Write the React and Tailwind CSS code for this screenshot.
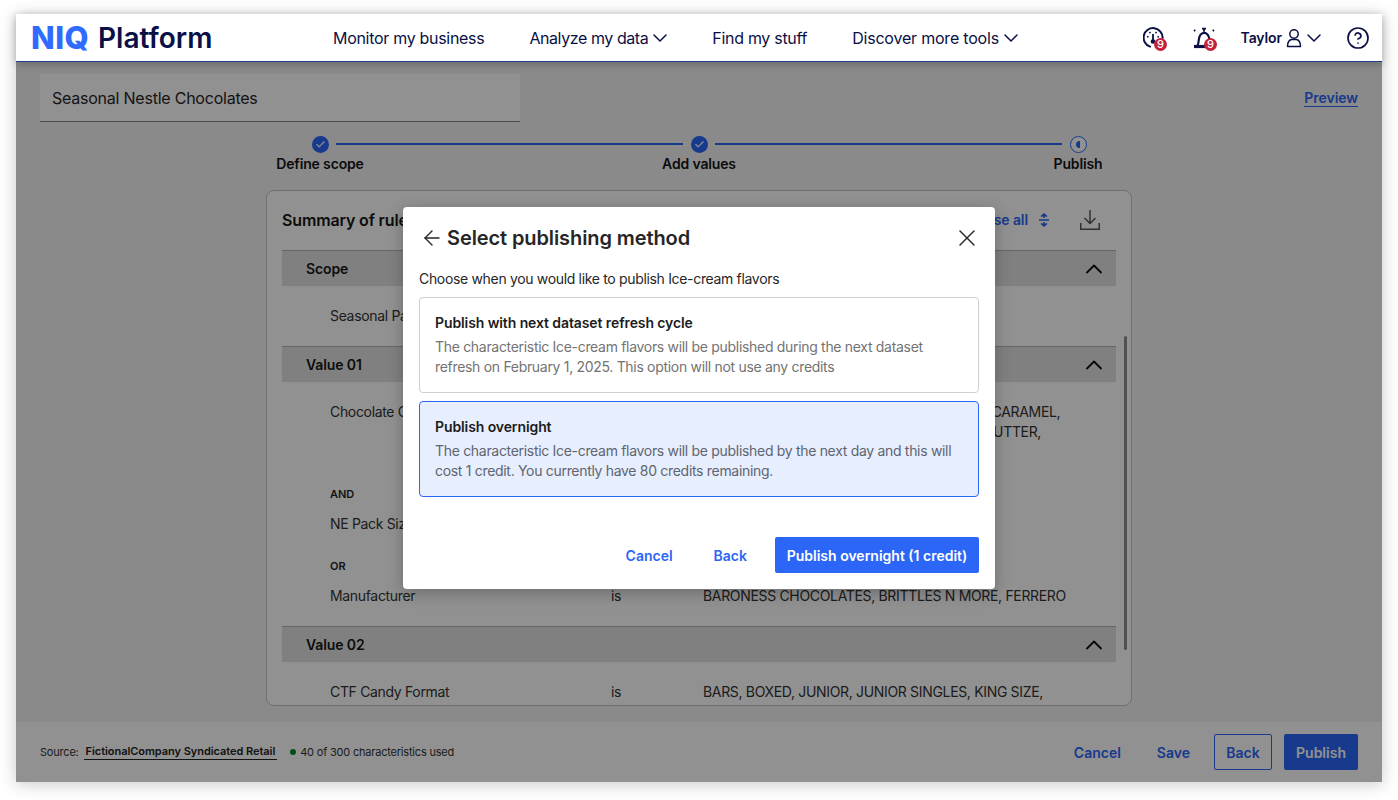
import React from "react";
import { ArrowLeft, X, ChevronUp, ChevronDown, CircleHelp, Check } from "lucide-react";

function Badge({ left }) {
  return (
    <span className={`absolute top-[12.5px] flex h-[13px] w-[13px] items-center justify-center rounded-full bg-[#c4213f] text-[11px] font-medium leading-none text-white ${left}`}>
      9
    </span>
  );
}

function Gauge() {
  return (
    <span className="relative block h-[24px] w-[24px]">
      <svg width="24" height="24" viewBox="0 0 24 24" fill="none" stroke="#0a1045" strokeWidth="2" className="absolute left-0 top-0">
        <path d="M7 20.600A9.500 9.500 0 1 1 19.600 12" strokeLinecap="round" />
        <path d="M10 8v6" strokeWidth="1.800" />
        <circle cx="10" cy="15.500" r="2.300" fill="#0a1045" stroke="none" />
        <path d="M4 10.500l1.500.5M6.500 6l1 1.200M13.500 6l-1 1.200M16 10.500l-1.500.5" strokeWidth="1.500" />
      </svg>
      <Badge left="left-[11.5px]" />
    </span>
  );
}

function Alarm() {
  return (
    <span className="relative block h-[24px] w-[24px]">
      <svg width="24" height="24" viewBox="0 0 24 24" fill="none" stroke="#0a1045" strokeWidth="2.200" className="absolute left-0 top-0">
        <path d="M10 2.700h4M12 2.700v3" strokeWidth="1.800" />
        <path d="M5 20.500c1.200-1.500 1.500-3 1.800-6.500.3-4 2.400-7.200 5.200-7.200s5 3 5.400 6.500" />
        <path d="M2 20.500h11" strokeWidth="3.200" />
        <path d="M2 4l1.300 1M22 4l-1.300 1" strokeWidth="1.800" />
      </svg>
      <Badge left="left-[12.5px]" />
    </span>
  );
}

function UserIcon() {
  return (
    <svg width="17" height="20" viewBox="0 0 17 20" fill="none" stroke="#0a1045" strokeWidth="1.500" className="ml-[3px]">
      <circle cx="9" cy="6" r="4.200" />
      <path d="M2.500 18.500c0-4.500 1.800-6.500 4-7h5c2.200.5 4 2.500 4 7z" strokeLinejoin="round" />
    </svg>
  );
}

function DownloadIcon() {
  return (
    <svg width="20" height="20" viewBox="0 0 20 20" fill="none" stroke="#555555" strokeWidth="1.500" className="ml-[30px]">
      <path d="M10 0v13M4.500 8l5.500 5.500L15.500 8" />
      <path d="M.75 13v6.250h18.500V13" />
    </svg>
  );
}

function CollapseIcon() {
  return (
    <svg width="12" height="14" viewBox="0 0 12 14" fill="none" stroke="#2b66f6" strokeWidth="1.500" className="ml-[10px]">
      <path d="M1 7h10" />
      <path d="M6 1.500v3.500M6 9v3.500" />
      <path d="M3 3.500L6 1l3 2.500M3 10.500L6 13l3-2.500" fill="#2b66f6" />
    </svg>
  );
}

function StepDone({ label }) {
  return (
    <div className="flex w-[120px] shrink-0 flex-col items-center">
      <span className="flex h-[17px] w-[17px] items-center justify-center rounded-full bg-[#2b66f6]">
        <Check size={11} strokeWidth={2.5} className="text-white" />
      </span>
      <span className="mt-[1px] text-[14px] font-semibold leading-[20px] tracking-[-0.15px] text-[#161616]">{label}</span>
    </div>
  );
}

function SectionBar({ label }) {
  return (
    <div className="flex h-[36px] items-center justify-between border-t border-[#b5b5b5] bg-[#e2e2e2] pl-[24px] pr-[8px]">
      <span className="text-[14px] font-semibold tracking-[-0.1px] text-[#161616]">{label}</span>
      <ChevronUp size={28} strokeWidth={1.600} className="text-[#111111]" />
    </div>
  );
}

function Rule({ name, value, className = "" }) {
  return (
    <div className={`flex text-[14px] leading-[20px] tracking-[-0.33px] text-[#333333] ${className}`}>
      <span className="w-[329px] shrink-0 pl-[48px]">{name}</span>
      <span className="w-[92px] shrink-0">is</span>
      <span className="whitespace-pre-line">{value}</span>
    </div>
  );
}

function Connector({ label }) {
  return <div className="pl-[48px] text-[11px] font-semibold leading-[16px] text-[#262626]">{label}</div>;
}

function Option({ title, lines, selected }) {
  return (
    <div
      className={`h-[96px] rounded-[4px] border px-[15px] pt-[15px] ${
        selected ? "border-[#2b66f6] bg-[#e7eefe]" : "border-[#cfcfcf] bg-white"
      }`}
    >
      <div className="text-[14px] font-semibold leading-[20px] tracking-[-0.1px] text-[#1c1c1c]">{title}</div>
      <div className={`mt-[4px] whitespace-nowrap text-[14px] leading-[20px] tracking-[-0.31px] ${selected ? "text-[#5f6570]" : "text-[#737373]"}`}>
        {lines[0]}
        <br />
        {lines[1]}
      </div>
    </div>
  );
}

export default function App() {
  return (
    <div className="min-h-[800px] bg-white px-[16px] pb-[18px] pt-[14px] font-['Inter',sans-serif]">
      <div className="flex h-[768px] flex-col shadow-[0_2px_16px_rgba(0,0,0,0.22)]">
        <header className="z-20 flex h-[48px] shrink-0 items-center border-b border-[#1f3f8a] bg-white text-[#0a1045] shadow-[0_2px_8px_rgba(0,0,0,0.25)]">
          <div className="flex w-[317px] shrink-0 items-center pl-[15px]">
            <span className="text-[31px] font-extrabold leading-none tracking-[0.4px] text-[#2f6bff]">NIQ</span>
            <span className="ml-[9px] text-[28px] font-semibold leading-none">Platform</span>
          </div>
          <nav className="flex items-center gap-[45px] text-[16px] tracking-[-0.3px]">
            <span>Monitor my business</span>
            <span className="flex items-center tracking-[-0.42px]">
              Analyze my data <ChevronDown size={24} strokeWidth={1.500} className="-mr-[5px]" />
            </span>
            <span>Find my stuff</span>
            <span className="flex items-center tracking-[-0.2px]">
              Discover more tools <ChevronDown size={24} strokeWidth={1.500} className="-mr-[5px]" />
            </span>
          </nav>
          <div className="ml-auto flex items-center pr-[12px]">
            <Gauge />
            <span className="ml-[25px]"><Alarm /></span>
            <span className="ml-[25px] text-[14px] font-semibold tracking-[-0.1px]">Taylor</span>
            <UserIcon />
            <ChevronDown size={24} strokeWidth={1.500} />
            <CircleHelp size={24} strokeWidth={1.700} className="ml-[20px]" />
          </div>
        </header>

        <div className="relative flex min-h-0 flex-1 flex-col bg-white">
          <main className="flex min-h-0 flex-1 flex-col bg-[#f2f2f2] px-[24px] pt-[12px]">
            <div className="flex items-center justify-between">
              <div className="flex h-[48px] w-[480px] items-center border-b border-[#8a8a8a] bg-white pl-[12px] text-[16px] tracking-[-0.23px] text-[#262626]">
                Seasonal Nestle Chocolates
              </div>
              <span className="border-b border-[#2b66f6] text-[14px] font-semibold leading-[17px] tracking-[-0.05px] text-[#2b66f6]">Preview</span>
            </div>

            <div className="mx-[220px] mt-[14px] flex items-start">
              <StepDone label="Define scope" />
              <div className="mx-[-44px] mt-[7px] h-[2px] flex-1 bg-[#2b66f6]" />
              <StepDone label="Add values" />
              <div className="mx-[-44px] mt-[7px] h-[2px] flex-1 bg-[#2b66f6]" />
              <div className="flex w-[120px] shrink-0 flex-col items-center">
                <span className="flex h-[17px] w-[17px] items-center justify-center rounded-full border border-[#2b66f6] bg-white">
                  <span className="h-[7px] w-[3.500px] rounded-l-full bg-[#2b66f6]" />
                </span>
                <span className="mt-[1px] text-[14px] font-semibold leading-[20px] tracking-[-0.15px] text-[#161616]">Publish</span>
              </div>
            </div>

            <section className="mx-auto mt-[16px] flex h-[516px] w-[866px] flex-col overflow-hidden rounded-[8px] border border-[#c6c6c6] bg-white">
              <div className="flex h-[59px] shrink-0 items-center justify-between pb-[2px] pl-[15px] pr-[31px]">
                <span className="text-[16px] font-semibold tracking-[-0.15px] text-[#161616]">Summary of rules</span>
                <div className="flex items-center">
                  <span className="text-[14px] font-semibold tracking-[-0.1px] text-[#2b66f6]">Collapse all</span>
                  <CollapseIcon />
                  <DownloadIcon />
                </div>
              </div>
              <div className="relative flex-1 overflow-hidden px-[15px]">
                <SectionBar label="Scope" />
                <div className="h-[60px] pt-[20px]">
                  <div className="pl-[48px] text-[14px] leading-[20px] tracking-[-0.33px] text-[#333333]">Seasonal Packs</div>
                </div>
                <SectionBar label="Value 01" />
                <Rule
                  className="pt-[20px]"
                  name="Chocolate Coating"
                  value={"ALMOND, BUTTERSCOTCH, COCONUT, FIG, CARAMEL,\nDARK, HAZELNUT, MINT, TOFFEE, PEANUT BUTTER,\nWHITE"}
                />
                <div className="pt-[24px]"><Connector label="AND" /></div>
                <Rule className="pt-[12px]" name="NE Pack Size" value="LARGE, SMALL" />
                <div className="pt-[24px]"><Connector label="OR" /></div>
                <Rule className="pt-[12px]" name="Manufacturer" value="BARONESS CHOCOLATES, BRITTLES N MORE, FERRERO" />
                <div className="h-[20px]" />
                <SectionBar label="Value 02" />
                <Rule className="pt-[20px]" name="CTF Candy Format" value="BARS, BOXED, JUNIOR, JUNIOR SINGLES, KING SIZE," />
                <div className="absolute right-[4px] top-[86px] h-[314px] w-[3px] rounded-full bg-[#8f8f8f]" />
              </div>
            </section>
          </main>

          <footer className="flex h-[60px] shrink-0 items-center justify-between bg-white px-[24px]">
            <div className="flex items-center text-[11px] tracking-[-0.2px] text-[#333333]">
              <span>Source:</span>
              <span className="ml-[5px] border-b border-[#222222] px-[2px] font-semibold leading-[15px] tracking-[-0.05px] text-[#222222]">FictionalCompany Syndicated Retail</span>
              <span className="ml-[13px] h-[6px] w-[6px] rounded-full bg-[#0a8a2a]" />
              <span className="ml-[4px]">40 of 300 characteristics used</span>
            </div>
            <div className="flex items-center text-[14px] font-semibold text-[#2b66f6]">
              <span>Cancel</span>
              <span className="ml-[36px]">Save</span>
              <span className="ml-[24px] flex h-[36px] w-[58px] items-center justify-center rounded-[2px] border border-[#2b66f6]">Back</span>
              <span className="ml-[12px] flex h-[36px] w-[74px] items-center justify-center rounded-[2px] bg-[#2b66f6] text-white">Publish</span>
            </div>
          </footer>

          <div className="absolute inset-0 z-10 flex justify-center bg-[rgba(0,0,0,0.43)] pt-[145px]">
            <div className="h-[382px] w-[592px] rounded-[4px] bg-white px-[16px] shadow-[0_4px_16px_rgba(0,0,0,0.25)]">
              <div className="flex h-[62px] items-center justify-between">
                <div className="flex items-center">
                  <ArrowLeft size={24} strokeWidth={1.400} className="ml-[1px] text-[#262626]" />
                  <span className="ml-[3px] text-[20px] font-semibold tracking-[-0.1px] text-[#262626]">Select publishing method</span>
                </div>
                <X size={28} strokeWidth={1.200} className="-mr-[2px] text-[#262626]" />
              </div>
              <div className="text-[14px] leading-[20px] tracking-[-0.33px] text-[#262626]">Choose when you would like to publish Ice-cream flavors</div>
              <div className="mt-[8px] flex flex-col gap-[8px]">
                <Option
                  title="Publish with next dataset refresh cycle"
                  lines={[
                    "The characteristic Ice-cream flavors will be published during the next dataset",
                    "refresh on February 1, 2025. This option will not use any credits",
                  ]}
                />
                <Option
                  selected
                  title="Publish overnight"
                  lines={[
                    "The characteristic Ice-cream flavors will be published by the next day and this will",
                    "cost 1 credit. You currently have 80 credits remaining.",
                  ]}
                />
              </div>
              <div className="mt-[40px] flex items-center justify-end text-[14px] font-semibold text-[#2b66f6]">
                <span>Cancel</span>
                <span className="ml-[41px]">Back</span>
                <span className="ml-[28px] flex h-[36px] w-[204px] items-center justify-center rounded-[2px] bg-[#2b66f6] text-white">Publish overnight (1 credit)</span>
              </div>
            </div>
          </div>
        </div>
      </div>
    </div>
  );
}
